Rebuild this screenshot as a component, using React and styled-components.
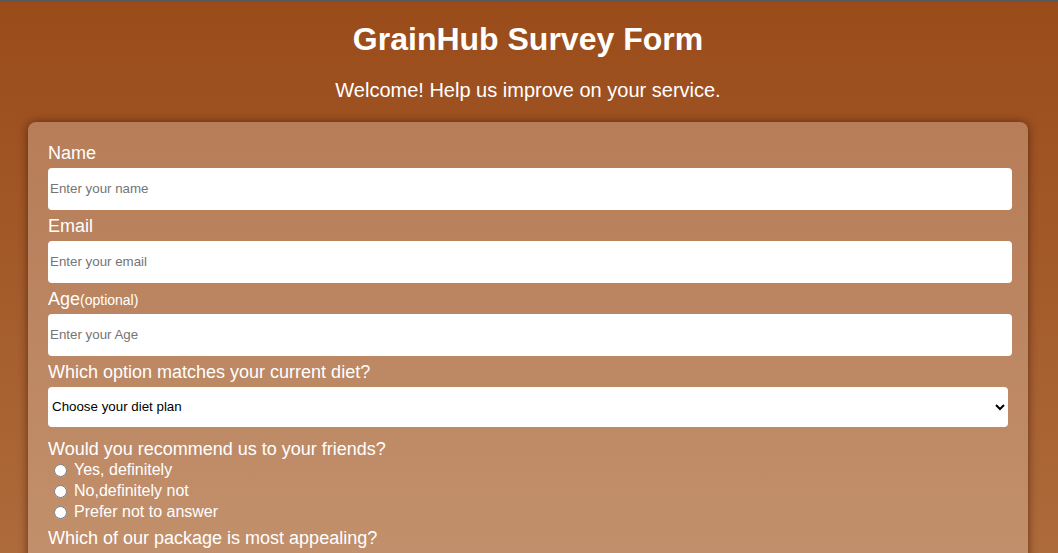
import React from "react";
import styled, { createGlobalStyle } from "styled-components";

const GlobalStyle = createGlobalStyle`
  html {
    background: linear-gradient(180deg, #9a4b1a 0px, #ae6b3b 560px, #c08452 1100px);
    min-height: 100%;
  }
  body {
    margin: 0;
    border-top: 2px solid #5a5a5a;
    font-family: "Liberation Sans", Arial, Helvetica, sans-serif;
    color: #fff;
  }
`;

const Page = styled.div`
  padding: 0 30px 40px 28px;
`;

const Title = styled.h1`
  text-align: center;
  font-size: 32px;
  font-weight: bold;
  margin: 18.5px 0 21.4px;
`;

const Subtitle = styled.p`
  text-align: center;
  font-size: 20px;
  margin: 0 0 20px;
`;

const Card = styled.form`
  max-width: 960px;
  margin: 0 auto;
  padding: 21px 20px 20px;
  border-radius: 8px;
  background: rgba(255, 255, 255, 0.25);
  box-shadow: 0 0 10px rgba(40, 10, 0, 0.55);
`;

const Label = styled.label`
  display: block;
  font-size: 18px;
  line-height: 21px;
  margin-bottom: ${(props) => (props.tight ? "0" : "4px")};
`;

const Small = styled.span`
  font-size: 14px;
  line-height: 1;
`;

const Input = styled.input`
  display: block;
  box-sizing: content-box;
  width: 100%;
  height: 42px;
  padding: 0 2px;
  margin: 0 0 6px;
  border: none;
  border-radius: 4px;
  background: #fff;
  font-family: "Liberation Sans", Arial, sans-serif;
  font-size: 13.33px;
  color: #000;
  &::placeholder {
    color: #757575;
  }
`;

const Select = styled.select`
  display: block;
  width: 100%;
  height: 40px;
  padding: 0;
  margin: 0 0 12px;
  border: none;
  border-radius: 4px;
  background: #fff;
  font-family: "Liberation Sans", Arial, sans-serif;
  font-size: 13.33px;
  color: #000;
`;

const Group = styled.div`
  margin-bottom: 5px;
`;

const Option = styled.label`
  display: flex;
  align-items: center;
  height: 21px;
  font-size: 16px;
  input {
    margin: 0 7px 0 6px;
  }
`;

const TextArea = styled.textarea`
  display: block;
  box-sizing: border-box;
  width: 100%;
  height: 100px;
  border: none;
  border-radius: 4px;
  margin-bottom: 12px;
`;

const Submit = styled.button`
  display: block;
  width: 100%;
  height: 40px;
  border: none;
  border-radius: 4px;
  background: #8a3f12;
  color: #fff;
  font-size: 18px;
`;

const App = () => {
  const recommend = ["Yes, definitely", "No,definitely not", "Prefer not to answer"];
  const features = ["Quality", "Price", "Delivery", "Customer service"];

  return (
    <Page>
      <GlobalStyle />
      <Title>GrainHub Survey Form</Title>
      <Subtitle>Welcome! Help us improve on your service.</Subtitle>
      <Card onSubmit={(e) => e.preventDefault()}>
        <Label htmlFor="name">Name</Label>
        <Input id="name" type="text" placeholder="Enter your name" />
        <Label htmlFor="email">Email</Label>
        <Input id="email" type="email" placeholder="Enter your email" />
        <Label htmlFor="age">
          Age<Small>(optional)</Small>
        </Label>
        <Input id="age" type="number" placeholder="Enter your Age" />
        <Label htmlFor="diet">Which option matches your current diet?</Label>
        <Select id="diet" defaultValue="">
          <option value="">Choose your diet plan</option>
          <option>Vegetarian</option>
          <option>Vegan</option>
          <option>Omnivore</option>
        </Select>
        <Label tight>Would you recommend us to your friends?</Label>
        <Group>
          {recommend.map((r) => (
            <Option key={r}>
              <input type="radio" name="recommend" />
              {r}
            </Option>
          ))}
        </Group>
        <Label htmlFor="package">Which of our package is most appealing?</Label>
        <Select id="package" defaultValue="">
          <option value="">Choose a package</option>
          <option>Basic</option>
          <option>Premium</option>
        </Select>
        <Label tight>What would you like us to improve?</Label>
        <Group>
          {features.map((f) => (
            <Option key={f}>
              <input type="checkbox" />
              {f}
            </Option>
          ))}
        </Group>
        <Label htmlFor="comments">Any comments or suggestions?</Label>
        <TextArea id="comments" placeholder="Enter your comment here..." />
        <Submit type="submit">Submit</Submit>
      </Card>
    </Page>
  );
};

export default App;
